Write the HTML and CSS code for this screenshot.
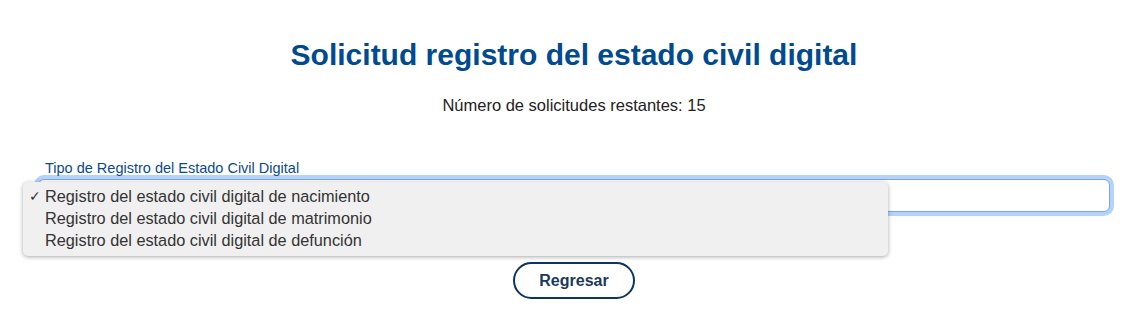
FILE: index.html
```html
<html>
    <head>
        <meta charset="UTF-8" name="viewport" content="width=device-width, initial-scale=1.0">
        <link rel="stylesheet" href="styles.css">
    </head>
    <body>
        <div class="pagina">
            <h1 class="titulo">Solicitud registro del estado civil digital</h1>
            <p class="restantes">Número de solicitudes restantes: 15</p>

            <div class="campo">
                <label class="etiqueta">Tipo de Registro del Estado Civil Digital</label>
                <div class="selector"></div>

                <ul class="opciones">
                    <li class="opcion marcada">Registro del estado civil digital de nacimiento</li>
                    <li class="opcion">Registro del estado civil digital de matrimonio</li>
                    <li class="opcion">Registro del estado civil digital de defunción</li>
                </ul>
            </div>

            <div class="acciones">
                <button class="knapp">Regresar</button>
            </div>
        </div>
    </body>
</html>
```

FILE: styles.css
```css
html {
    background: white;
}

body {
    margin: 0;
    font-family: "Liberation Sans", Arial, sans-serif;
    color: #222;
}

.pagina {
    padding: 38px 38px 0 38px;
}

.titulo {
    margin: 0;
    text-align: center;
    font-size: 30px;
    line-height: 34px;
    color: #004a8f;
}

.restantes {
    margin: 23px 0 0 0;
    text-align: center;
    font-size: 16.5px;
    line-height: 20px;
}

.campo {
    position: relative;
    margin-top: 45px;
}

.etiqueta {
    display: block;
    padding-left: 7px;
    font-size: 14.5px;
    line-height: 16px;
    color: #0b4a8e;
}

.selector {
    margin-top: 3px;
    height: 31px;
    border: 1px solid #79a6ea;
    border-radius: 6px;
    box-shadow: 0 0 0 4px #b5d2fb;
    background: white;
}

/* la lista abierta del selector */
.opciones {
    position: absolute;
    left: -15px;
    top: 22px;
    width: 865px;
    margin: 0;
    padding: 3px 0 5px 0;
    list-style: none;
    background: #f0f0f0;
    border-radius: 5px;
    box-shadow: 0 1px 4px rgba(0,0,0,0.35);
}

.opcion {
    position: relative;
    padding-left: 22px;
    font-size: 16.3px;
    line-height: 22px;
    color: #333;
}

.marcada::before {
    content: "✓";
    position: absolute;
    left: 6px;
    font-size: 14px;
    color: #333;
}

.acciones {
    margin-top: 50px;
    text-align: center;
}

.knapp {
    width: 122px;
    height: 37px;
    border: 2px solid #0d355f;
    border-radius: 19px;
    background: white;
    font-family: "Liberation Sans", Arial, sans-serif;
    font-size: 16px;
    font-weight: bold;
    color: #1c3a5c;
}
```
